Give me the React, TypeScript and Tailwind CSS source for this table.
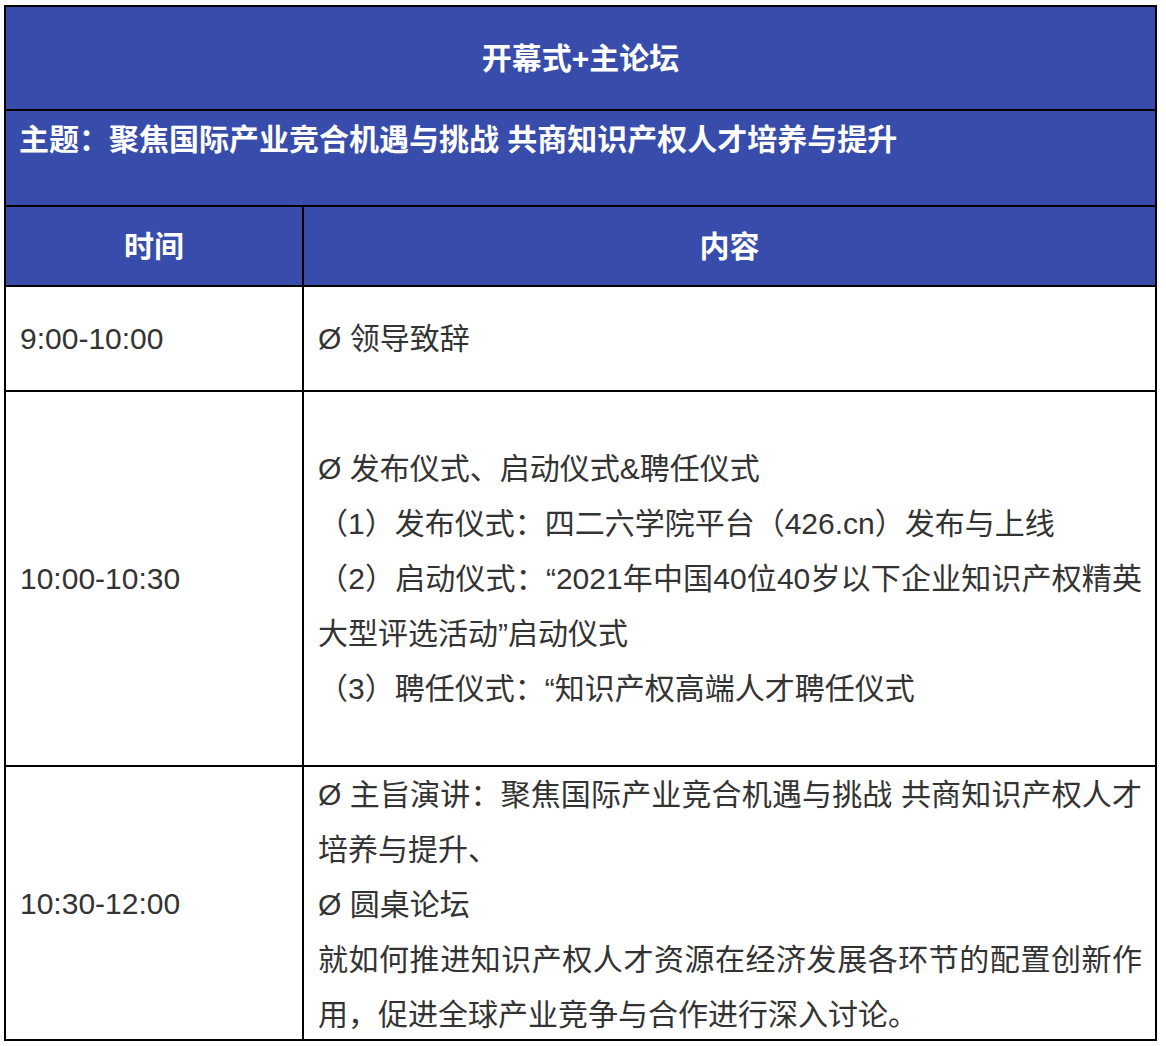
import React from "react";

const font = {
  fontFamily: '"Liberation Sans", "Noto Sans CJK SC", sans-serif',
};

export default function App() {
  return (
    <div className="min-h-screen bg-white pt-[5px] pl-[4px]" style={font}>
      <div className="w-[1153px] border-2 border-black text-[30px]">
        <div className="flex h-[104px] items-center justify-center border-b-2 border-black bg-[#384cab] font-bold text-white">
          开幕式+主论坛
        </div>
        <div className="h-[96px] border-b-2 border-black bg-[#384cab] pl-[13px] pt-px font-bold leading-[55px] text-white">
          主题：聚焦国际产业竞合机遇与挑战 共商知识产权人才培养与提升
        </div>
        <div className="flex h-[80px] border-b-2 border-black bg-[#384cab] font-bold text-white">
          <div className="flex w-[298px] items-center justify-center border-r-2 border-black">时间</div>
          <div className="flex flex-1 items-center justify-center">内容</div>
        </div>
        <div className="flex h-[105px] border-b-2 border-black text-[#333333]">
          <div className="flex w-[298px] items-center border-r-2 border-black pl-[14px]">9:00-10:00</div>
          <div className="flex flex-1 items-center pl-[14px]">Ø 领导致辞</div>
        </div>
        <div className="flex h-[375px] border-b-2 border-black text-[#333333]">
          <div className="flex w-[298px] items-center border-r-2 border-black pl-[14px]">10:00-10:30</div>
          <div className="flex flex-1 flex-col justify-center whitespace-nowrap pl-[14px] pr-[13px] leading-[55px]">
            <div>Ø 发布仪式、启动仪式&amp;聘任仪式</div>
            <div>（1）发布仪式：四二六学院平台（426.cn）发布与上线</div>
            <div className="text-justify [text-align-last:justify]">（2）启动仪式：“2021年中国40位40岁以下企业知识产权精英</div>
            <div>大型评选活动”启动仪式</div>
            <div>（3）聘任仪式：“知识产权高端人才聘任仪式</div>
          </div>
        </div>
        <div className="flex h-[272px] text-[#333333]">
          <div className="flex w-[298px] items-center border-r-2 border-black pl-[14px]">10:30-12:00</div>
          <div className="flex flex-1 flex-col whitespace-nowrap pl-[14px] pr-[13px] leading-[55px]">
            <div className="text-justify [text-align-last:justify]">Ø 主旨演讲：聚焦国际产业竞合机遇与挑战 共商知识产权人才</div>
            <div>培养与提升、</div>
            <div>Ø 圆桌论坛</div>
            <div className="text-justify [text-align-last:justify]">就如何推进知识产权人才资源在经济发展各环节的配置创新作</div>
            <div>用，促进全球产业竞争与合作进行深入讨论。</div>
          </div>
        </div>
      </div>
    </div>
  );
}
